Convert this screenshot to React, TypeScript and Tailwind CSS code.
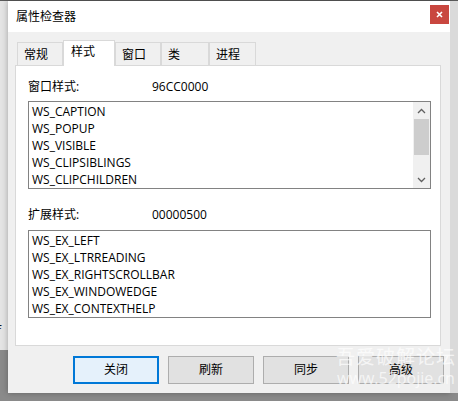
import React from "react";

const font = { fontFamily: '"Segoe UI", "Open Sans", "Noto Sans CJK SC", sans-serif' };

const tabs = ["常规", "样式", "窗口", "类", "进程"];
const tabWidths = ["w-[46px]", "w-[52px]", "w-[46px]", "w-[48px]", "w-[47px]"];

const styles = ["WS_CAPTION", "WS_POPUP", "WS_VISIBLE", "WS_CLIPSIBLINGS", "WS_CLIPCHILDREN"];
const exStyles = ["WS_EX_LEFT", "WS_EX_LTRREADING", "WS_EX_RIGHTSCROLLBAR", "WS_EX_WINDOWEDGE", "WS_EX_CONTEXTHELP"];

function ListBox(props: { items: string[], scroll?: boolean }) {
    return (
        <div className="h-[88px] w-[403px] border border-[#828282] bg-white flex flex-row">
            <div className="flex-1 flex flex-col pl-[3px] pt-[1px]">
                {props.items.map(item => (
                    <div key={item} className="h-[17px] leading-[17px] text-[12px] text-black">{item}</div>
                ))}
            </div>
            {props.scroll ? (
                <div className="w-[17px] bg-[#f0f0f0] flex flex-col">
                    <div className="h-[17px] flex items-center justify-center">
                        <svg width="9" height="6" viewBox="0 0 9 6"><path d="M1 5 L4.5 1.5 L8 5" stroke="#606060" strokeWidth="1.3" fill="none" /></svg>
                    </div>
                    <div className="h-[36px] mx-[1px] bg-[#cdcdcd]" />
                    <div className="flex-1" />
                    <div className="h-[17px] flex items-center justify-center">
                        <svg width="9" height="6" viewBox="0 0 9 6"><path d="M1 1 L4.5 4.5 L8 1" stroke="#606060" strokeWidth="1.3" fill="none" /></svg>
                    </div>
                </div>
            ) : null}
        </div>
    );
}

function Btn(props: { label: string, focused?: boolean }) {
    const cls = props.focused
        ? "border-2 border-[#0078d7] bg-[#e5f1fb]"
        : "border border-[#adadad] bg-[#e1e1e1]";
    return (
        <div className={`${cls} w-[86px] h-[28px] flex items-center justify-center text-[12px] text-black`}>
            {props.label}
        </div>
    );
}

export default function App() {
    return (
        <div className="w-[458px] h-[401px] bg-[#8a8a8a] flex flex-col relative overflow-hidden" style={font}>
            <div className="h-[1px] bg-[#5a5a5a]" />
            <div className="flex flex-row">
                <div className="w-[8px] h-[349px] bg-[#e4e4e4] flex flex-col">
                    <div className="h-[322px]" />
                    <div className="text-[12px] leading-[16px] text-black -ml-[3px]">f</div>
                </div>
                <div className="w-[442px] h-[392px] bg-[#f0f0f0] flex flex-col shadow-[0_0_6px_rgba(0,0,0,0.3)]">
                    <div className="h-[31px] bg-white flex flex-row items-center justify-between pl-[8px] pr-[1px]">
                        <span className="text-[12px] text-black">属性检查器</span>
                        <div className="w-[19px] h-[19px] bg-[#c9473f] flex items-center justify-center -mt-[4px]">
                            <svg width="7" height="7" viewBox="0 0 7 7"><path d="M1 1 L6 6 M6 1 L1 6" stroke="white" strokeWidth="1.6" /></svg>
                        </div>
                    </div>
                    <div className="pl-[7px] pr-[9px] pt-[7px]">
                        <div className="flex flex-row items-end h-[26px] pl-[2px]">
                            {tabs.map((t, i) => i === 1 ? (
                                <div key={t} className={`${tabWidths[i]} h-[26px] bg-white border border-b-0 border-[#d9d9d9] -mb-[1px] relative z-10 pl-[7px] pt-[2px] text-[12px] text-black`}>{t}</div>
                            ) : (
                                <div key={t} className={`${tabWidths[i]} h-[23px] bg-[#f0f0f0] border border-b-0 border-[#d9d9d9] pl-[6px] pt-[3px] text-[12px] text-black`}>{t}</div>
                            ))}
                        </div>
                        <div className="h-[281px] bg-white border border-[#d9d9d9] flex flex-col pl-[12px] pt-[12px]">
                            <div className="flex flex-row h-[18px] items-center text-[12px] text-black">
                                <span className="w-[124px]">窗口样式:</span>
                                <span>96CC0000</span>
                            </div>
                            <div className="mt-[5px]">
                                <ListBox items={styles} scroll />
                            </div>
                            <div className="flex flex-row h-[18px] items-center text-[12px] text-black mt-[17px]">
                                <span className="w-[124px]">扩展样式:</span>
                                <span>00000500</span>
                            </div>
                            <div className="mt-[6px]">
                                <ListBox items={exStyles} />
                            </div>
                        </div>
                    </div>
                    <div className="flex flex-row gap-[9px] pl-[65px] pt-[10px]">
                        <Btn label="关闭" focused />
                        <Btn label="刷新" />
                        <Btn label="同步" />
                        <Btn label="高级" />
                    </div>
                </div>
                <div className="w-[8px] h-[392px] bg-[#dadada]" />
            </div>
            <div className="absolute left-[336px] top-[346px] flex flex-col items-center pointer-events-none text-white/70 leading-none">
                <span className="text-[19px] tracking-[1px]" style={{ fontFamily: '"Noto Sans CJK SC", sans-serif' }}>吾爱破解论坛</span>
                <span className="text-[16px] mt-[5px]">www.52pojie.cn</span>
            </div>
        </div>
    );
}
